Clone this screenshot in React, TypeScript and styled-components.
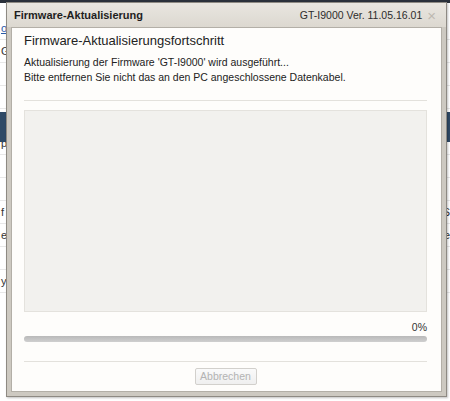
import styled, { createGlobalStyle } from 'styled-components';

const GlobalStyle = createGlobalStyle`
  html, body {
    margin: 0;
    padding: 0;
    background: #ffffff;
    overflow: hidden;
  }

  body {
    font-family: 'Liberation Sans', Arial, sans-serif;
  }
`;

const BACKGROUND_ROWS = [
  { left: 'o', right: '', link: true },
  { left: 'G', right: '' },
  { left: '', right: '' },
  { left: '', right: '' },
  { left: '', right: '' },
  { left: 'p', right: '' },
  { left: '', right: '' },
  { left: '', right: '' },
  { left: 'f', right: 'S' },
  { left: 'e', right: 'e' },
  { left: '', right: '' },
  { left: 'y', right: '' },
];

const App = () => {
  return (
    <>
      <GlobalStyle />
      <Screen>
        <PageBehind>
          <PageTopBar />
          <PageRows>
            {BACKGROUND_ROWS.map((row, index) => (
              <PageRow key={index} $link={row.link}>
                <span>{row.left}</span>
                <span>{row.right}</span>
              </PageRow>
            ))}
          </PageRows>
          <PageBand />
        </PageBehind>

        <Window>
          <TitleBar>
            <TitleText>Firmware-Aktualisierung</TitleText>
            <TitleRight>
              <VersionText>GT-I9000 Ver. 11.05.16.01</VersionText>
              <CloseButton aria-label='schließen'>×</CloseButton>
            </TitleRight>
          </TitleBar>

          <WindowBody>
            <Heading>Firmware-Aktualisierungsfortschritt</Heading>
            <Message>
              Aktualisierung der Firmware 'GT-I9000' wird ausgeführt...
              <br />
              Bitte entfernen Sie nicht das an den PC angeschlossene Datenkabel.
            </Message>
            <Divider $gap={15} />
            <LogPanel />
            <Percent>0%</Percent>
            <ProgressTrack>
              <ProgressFill style={{ width: '0%' }} />
            </ProgressTrack>
            <Divider $gap={19} />
            <Footer>
              <CancelButton disabled>Abbrechen</CancelButton>
            </Footer>
          </WindowBody>
        </Window>
      </Screen>
    </>
  );
};

const Screen = styled.div`
  position: relative;
  width: 450px;
  height: 401px;
  overflow: hidden;
  background: #ffffff;
`;

const PageBehind = styled.div`
  display: flex;
  flex-direction: column;
  height: 100%;
`;

const PageTopBar = styled.div`
  height: 3px;
  background: #2b313b;
`;

const PageRows = styled.div`
  display: flex;
  flex-direction: column;
  padding-top: 14px;
`;

const PageRow = styled.div<{ $link?: boolean }>`
  display: flex;
  justify-content: space-between;
  height: 22px;
  padding: 0 0 0 1px;
  border-bottom: 1px solid #e8e8e8;
  color: ${({ $link }) => ($link ? '#2a5aa8' : '#333333')};
  text-decoration: ${({ $link }) => ($link ? 'underline' : 'none')};
  font-size: 11px;
  line-height: 22px;
`;

const PageBand = styled.div`
  position: absolute;
  top: 112px;
  left: 0;
  right: 0;
  height: 30px;
  background: #2f4a66;
`;

const Window = styled.div`
  position: absolute;
  top: 2px;
  left: 6px;
  width: 441px;
  height: 395px;
  display: flex;
  flex-direction: column;
  box-sizing: border-box;
  border: 1px solid #8e8a83;
  background: #cdc9c1;
  padding: 0 4px 4px 4px;
  box-shadow: 1px 1px 2px rgba(0, 0, 0, 0.25);
`;

const TitleBar = styled.div`
  display: flex;
  justify-content: space-between;
  align-items: center;
  height: 24px;
  margin: 0 -4px;
  padding: 0 10px 0 7px;
  background: linear-gradient(#e9e6e0, #dcd8d0);
`;

const TitleText = styled.h1`
  margin: 0;
  color: #1e1e1e;
  font-size: 11px;
  font-weight: 700;
`;

const TitleRight = styled.div`
  display: flex;
  align-items: center;
  gap: 5px;
`;

const VersionText = styled.span`
  color: #2c2c2c;
  font-size: 10.5px;
`;

const CloseButton = styled.span`
  color: #bdb9b1;
  font-size: 15px;
  line-height: 15px;
`;

const WindowBody = styled.div`
  display: flex;
  flex-direction: column;
  flex: 1;
  padding: 5px 14px 6px 12px;
  border: 1px solid #b3afa7;
  background: #fefdfb;
`;

const Heading = styled.h2`
  margin: 0;
  color: #222222;
  font-size: 13px;
  font-weight: 400;
  line-height: 16px;
`;

const Message = styled.p`
  margin: 6px 0 0;
  color: #222222;
  font-size: 10.5px;
  line-height: 15px;
`;

const Divider = styled.hr<{ $gap: number }>`
  margin: ${({ $gap }) => $gap}px 0 0;
  border: 0;
  border-top: 1px solid #e3e1dc;
`;

const LogPanel = styled.div`
  flex: 1;
  margin-top: 9px;
  border: 1px solid #e4e2dd;
  background: #f2f1ee;
`;

const Percent = styled.div`
  margin-top: 8px;
  color: #333333;
  font-size: 10.5px;
  line-height: 14px;
  text-align: right;
`;

const ProgressTrack = styled.div`
  height: 6px;
  margin-top: 2px;
  border-radius: 3px;
  background: linear-gradient(#b9b9b9, #cfcfcf);
  overflow: hidden;
`;

const ProgressFill = styled.div`
  height: 100%;
  background: #4a8ad4;
`;

const Footer = styled.div`
  display: flex;
  justify-content: center;
  padding-top: 6px;
`;

const CancelButton = styled.button`
  width: 62px;
  height: 17px;
  padding: 0;
  border: 1px solid #d2d0cc;
  border-radius: 2px;
  background: linear-gradient(#fafafa, #efefef);
  color: #b3b3b3;
  font-family: 'Liberation Sans', Arial, sans-serif;
  font-size: 10.5px;
  line-height: 15px;
`;

export default App;
